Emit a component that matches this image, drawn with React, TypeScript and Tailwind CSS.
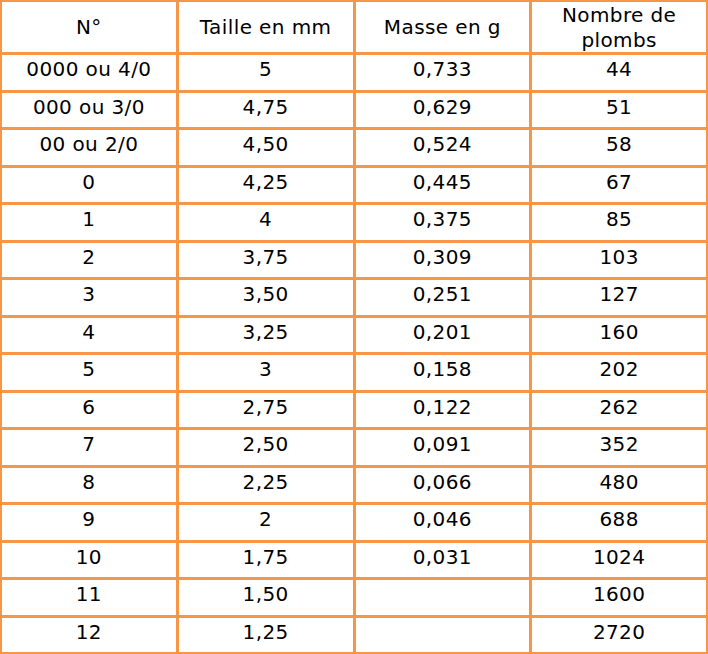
const rows: [string, string, string, string][] = [
  ['0000 ou 4/0', '5', '0,733', '44'],
  ['000 ou 3/0', '4,75', '0,629', '51'],
  ['00 ou 2/0', '4,50', '0,524', '58'],
  ['0', '4,25', '0,445', '67'],
  ['1', '4', '0,375', '85'],
  ['2', '3,75', '0,309', '103'],
  ['3', '3,50', '0,251', '127'],
  ['4', '3,25', '0,201', '160'],
  ['5', '3', '0,158', '202'],
  ['6', '2,75', '0,122', '262'],
  ['7', '2,50', '0,091', '352'],
  ['8', '2,25', '0,066', '480'],
  ['9', '2', '0,046', '688'],
  ['10', '1,75', '0,031', '1024'],
  ['11', '1,50', '', '1600'],
  ['12', '1,25', '', '2720'],
]

const headers = ['N°', 'Taille en mm', 'Masse en g', 'Nombre de plombs']

export default function App() {
  return (
    <div className="w-[708px] h-[654px] bg-white font-['DejaVu_Sans',sans-serif] text-[20px] tracking-[0.4px] text-black">
      <div className="grid grid-cols-4 grid-rows-[50px_repeat(16,34.5px)] gap-[3px] bg-[#f79646] p-[2px] w-[708px] h-[654px]">
        {headers.map((h) => (
          <div key={h} className="bg-white flex items-center justify-center text-center leading-[25px] px-[6px] pt-[1px]">
            {h}
          </div>
        ))}
        {rows.map((r, i) =>
          r.map((c, j) => (
            <div key={i + '-' + j} className="bg-white flex items-start justify-center pt-[2px] leading-[24px] whitespace-nowrap">
              {c}
            </div>
          ))
        )}
      </div>
    </div>
  )
}
